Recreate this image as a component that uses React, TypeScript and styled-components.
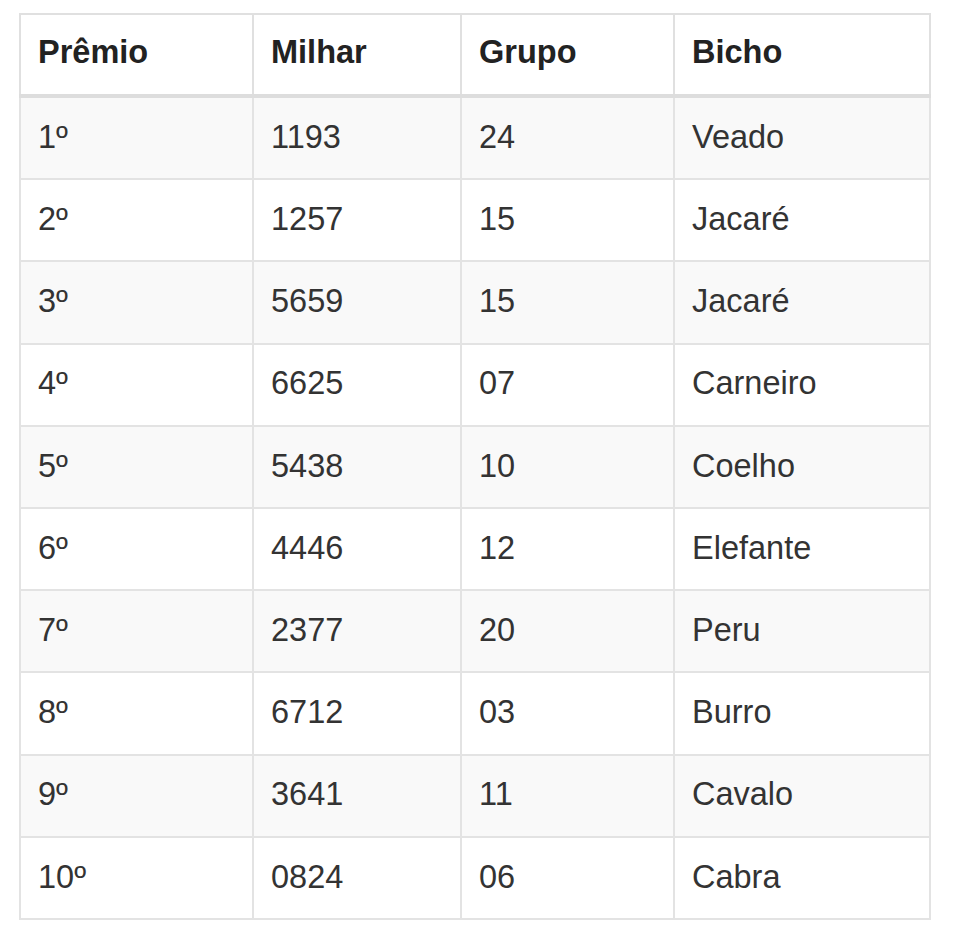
import styled, { createGlobalStyle } from 'styled-components';

const GlobalStyle = createGlobalStyle`
  html, body {
    margin: 0;
    padding: 0;
    background: #ffffff;
  }
`;

const Page = styled.div`
  padding: 13px 0 0 19px;
  width: 910px;
`;

const Table = styled.table`
  width: 910px;
  border-collapse: collapse;
  border: 2px solid #e0e0e0;
  font-family: 'Liberation Sans', Arial, sans-serif;
  font-size: 32.5px;
  color: #333333;
  table-layout: fixed;
`;

const HeadCell = styled.th`
  text-align: left;
  font-weight: bold;
  color: #222222;
  height: 74px;
  padding: 0 17px 5px;
  border: 2px solid #e0e0e0;
  border-bottom: 4px solid #dddddd;
  vertical-align: middle;
`;

const Row = styled.tr<{ $striped: boolean }>`
  background-color: ${(props) => (props.$striped ? '#f9f9f9' : '#ffffff')};
`;

const Cell = styled.td`
  height: 78.2px;
  padding: 0 17px 2px;
  border: 2px solid #e3e3e3;
  vertical-align: middle;
  line-height: 1;
`;

const results = [
  { premio: '1º', milhar: '1193', grupo: '24', bicho: 'Veado' },
  { premio: '2º', milhar: '1257', grupo: '15', bicho: 'Jacaré' },
  { premio: '3º', milhar: '5659', grupo: '15', bicho: 'Jacaré' },
  { premio: '4º', milhar: '6625', grupo: '07', bicho: 'Carneiro' },
  { premio: '5º', milhar: '5438', grupo: '10', bicho: 'Coelho' },
  { premio: '6º', milhar: '4446', grupo: '12', bicho: 'Elefante' },
  { premio: '7º', milhar: '2377', grupo: '20', bicho: 'Peru' },
  { premio: '8º', milhar: '6712', grupo: '03', bicho: 'Burro' },
  { premio: '9º', milhar: '3641', grupo: '11', bicho: 'Cavalo' },
  { premio: '10º', milhar: '0824', grupo: '06', bicho: 'Cabra' },
];

export default function App() {
  return (
    <>
      <GlobalStyle />
      <Page>
        <Table>
          <colgroup>
            <col style={{ width: 233 }} />
            <col style={{ width: 208 }} />
            <col style={{ width: 213 }} />
            <col style={{ width: 256 }} />
          </colgroup>
          <thead>
            <tr>
              <HeadCell>Prêmio</HeadCell>
              <HeadCell>Milhar</HeadCell>
              <HeadCell>Grupo</HeadCell>
              <HeadCell>Bicho</HeadCell>
            </tr>
          </thead>
          <tbody>
            {results.map((r, i) => (
              <Row key={r.premio} $striped={i % 2 === 0}>
                <Cell>{r.premio}</Cell>
                <Cell>{r.milhar}</Cell>
                <Cell>{r.grupo}</Cell>
                <Cell>{r.bicho}</Cell>
              </Row>
            ))}
          </tbody>
        </Table>
      </Page>
    </>
  );
}
